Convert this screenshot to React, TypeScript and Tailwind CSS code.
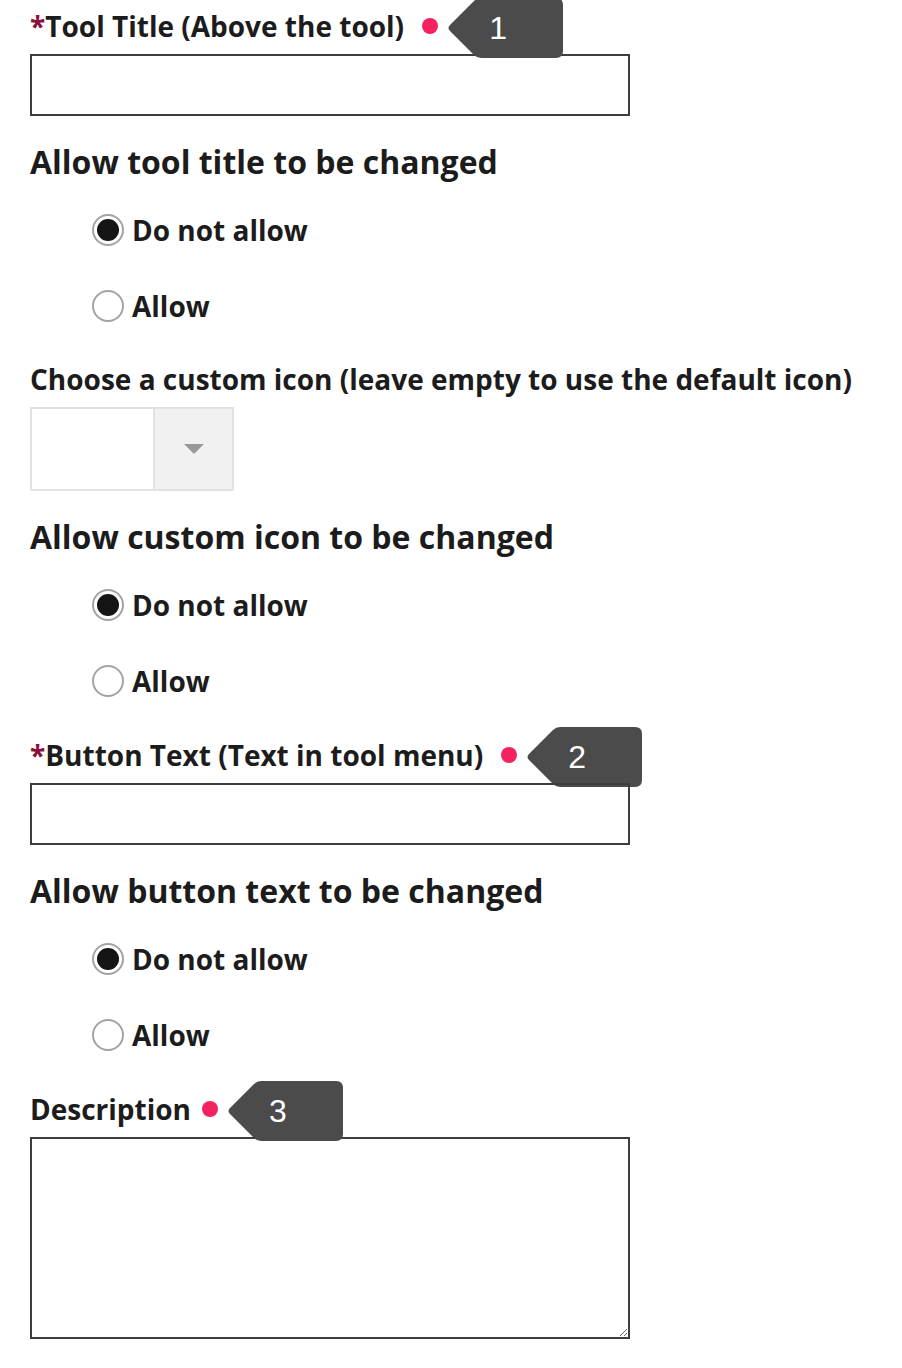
import { useState } from 'react';

const font = { fontFamily: '"Open Sans", "Liberation Sans", sans-serif' };

function Badge({ n }: { n: number }) {
  return (
    <span className="relative -my-[10px] flex h-[60px] w-[116px] shrink-0 items-center">
      <svg width="116" height="60" viewBox="0 0 116 60" className="absolute inset-0">
        <path
          d="M3 27 L27 3 Q30 0 34 0 L109 0 Q116 0 116 7 L116 53 Q116 60 109 60 L34 60 Q30 60 27 57 L3 33 Q0 30 3 27 Z"
          fill="#4b4b4b"
        />
      </svg>
      <span
        className="relative w-[102px] text-center text-[32px] font-normal leading-none text-white"
        style={{ fontFamily: '"Liberation Sans", Arial, sans-serif' }}
      >
        {n}
      </span>
    </span>
  );
}

function Label({ text, required, badge, dotGap }: { text: string; required?: boolean; badge?: number; dotGap?: string }) {
  return (
    <div className="flex h-[40px] items-center text-[28px] font-bold leading-[40px] text-[#1c1c1c]">
      {required && <span className="text-[#8a0f3c]">*</span>}
      <span>{text}</span>
      {badge !== undefined && (
        <>
          <span className={`${dotGap ?? 'ml-[18px]'} h-[16px] w-[16px] shrink-0 rounded-full bg-[#f4225e]`} />
          <span className="ml-[9px] mt-[3px]">
            <Badge n={badge} />
          </span>
        </>
      )}
    </div>
  );
}

function Radio({ checked, label, onClick }: { checked: boolean; label: string; onClick: () => void }) {
  return (
    <button type="button" onClick={onClick} className="flex h-[44px] items-center pl-[62px] text-left">
      <span className="flex h-[32px] w-[32px] items-center justify-center rounded-full border-2 border-[#a3a3a3] bg-white">
        {checked && <span className="h-[22px] w-[22px] rounded-full bg-[#141414]" />}
      </span>
      <span className="ml-[8px] text-[28px] font-bold text-[#1c1c1c]">{label}</span>
    </button>
  );
}

function RadioGroup() {
  const [allow, setAllow] = useState(false);
  return (
    <div className="mt-[24px] flex flex-col gap-[32px]">
      <Radio checked={!allow} label="Do not allow" onClick={() => setAllow(false)} />
      <Radio checked={allow} label="Allow" onClick={() => setAllow(true)} />
    </div>
  );
}

function Heading({ children }: { children: string }) {
  return <h2 className="mt-[24px] h-[44px] text-[32px] font-bold leading-[44px] text-[#1c1c1c]">{children}</h2>;
}

export default function App() {
  return (
    <div className="min-h-[1368px] bg-white pl-[30px] pt-[6px]" style={font}>
      <Label text="Tool Title (Above the tool)" required badge={1} />
      <input className="mt-[8px] block h-[62px] w-[600px] border-2 border-[#3d3d3d] px-3 text-[24px] outline-none" />

      <div className="mt-[2px]">
        <Heading>Allow tool title to be changed</Heading>
      </div>
      <RadioGroup />

      <div className="mt-[31px]">
        <Label text="Choose a custom icon (leave empty to use the default icon)" />
      </div>
      <div className="mt-[8px] flex h-[84px] w-[204px] border-2 border-[#e2e2e2]">
        <div className="w-[121px] bg-white" />
        <div className="flex flex-1 items-center justify-center border-l-2 border-[#e2e2e2] bg-[#f1f1f1]">
          <svg width="20" height="10" viewBox="0 0 20 10">
            <path d="M0 0 L20 0 L11 9 Q10 10 9 9 Z" fill="#999999" />
          </svg>
        </div>
      </div>

      <Heading>Allow custom icon to be changed</Heading>
      <RadioGroup />

      <div className="mt-[32px]">
        <Label text="Button Text (Text in tool menu)" required badge={2} />
      </div>
      <input className="relative mt-[8px] block h-[62px] w-[600px] border-2 border-[#3d3d3d] bg-transparent px-3 text-[24px] outline-none" />

      <Heading>Allow button text to be changed</Heading>
      <RadioGroup />

      <div className="mt-[32px]">
        <Label text="Description" badge={3} dotGap="ml-[11px]" />
      </div>
      <textarea className="mt-[8px] block h-[202px] w-[600px] border-2 border-[#3d3d3d] px-3 py-2 text-[24px] outline-none" />
    </div>
  );
}
